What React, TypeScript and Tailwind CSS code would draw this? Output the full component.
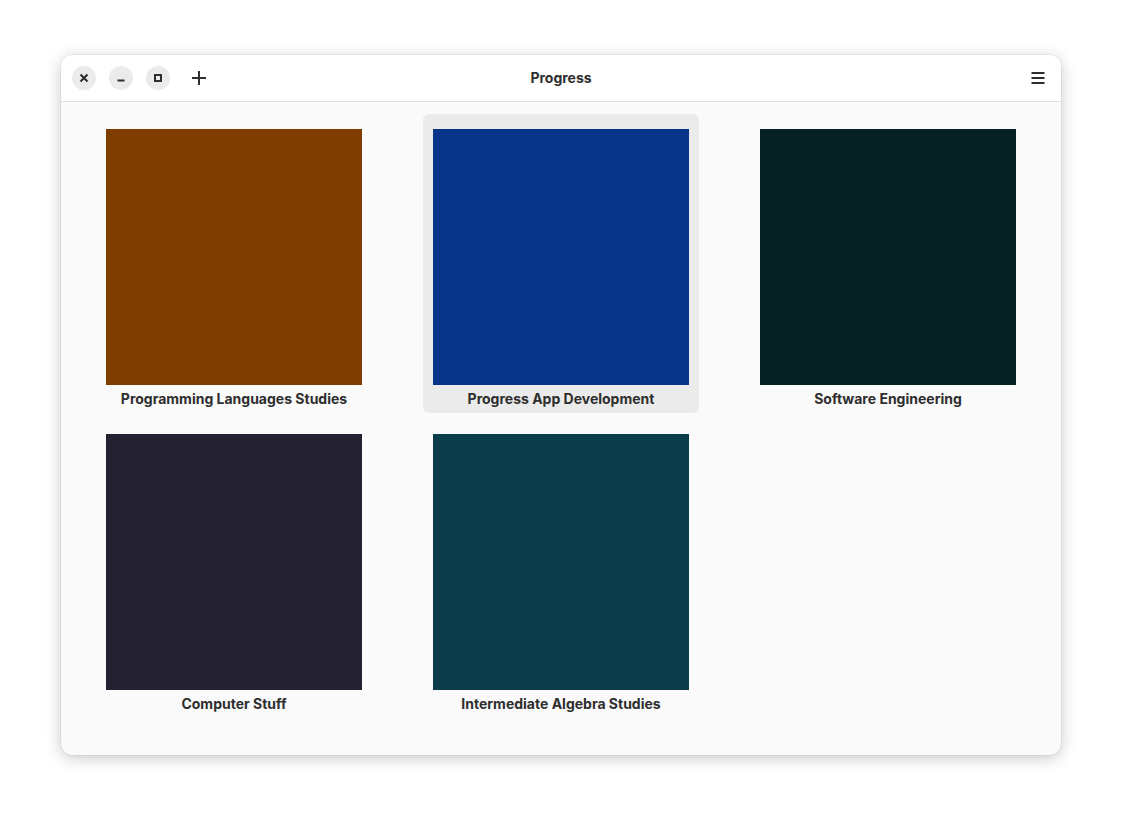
import React from "react";

const items = [
  { name: "Programming Languages Studies", color: "#7f3d00" },
  { name: "Progress App Development", color: "#08348a", selected: true },
  { name: "Software Engineering", color: "#051f22" },
  { name: "Computer Stuff", color: "#242131" },
  { name: "Intermediate Algebra Studies", color: "#0a3c4a" },
];

export default function App() {
  return (
    <div className="w-[1122px] h-[822px] bg-white flex items-start justify-center pt-[55px]" style={{ fontFamily: "Inter, 'Noto Sans', sans-serif" }}>
      <div className="w-[1000px] h-[700px] rounded-[12px] bg-[#fafafa] shadow-[0_3px_16px_rgba(0,0,0,0.22),0_0_0_1px_rgba(0,0,0,0.04)] overflow-hidden flex flex-col">
        <div className="h-[47px] bg-white border-b border-[#e0e0e0] flex items-center px-[11px] relative shrink-0">
          <div className="flex items-center gap-[13px]">
            <button className="w-[24px] h-[24px] rounded-full bg-[#ebebeb] flex items-center justify-center">
              <svg width="10" height="10" viewBox="0 0 10 10"><path d="M1.5 1.5L8.5 8.5M8.5 1.5L1.5 8.5" stroke="#2e2e2e" strokeWidth="2" /></svg>
            </button>
            <button className="w-[24px] h-[24px] rounded-full bg-[#ebebeb] flex items-center justify-center">
              <svg width="10" height="10" viewBox="0 0 10 10"><path d="M1.5 7.5H8.5" stroke="#2e2e2e" strokeWidth="2" /></svg>
            </button>
            <button className="w-[24px] h-[24px] rounded-full bg-[#ebebeb] flex items-center justify-center">
              <svg width="10" height="10" viewBox="0 0 10 10"><rect x="2" y="2" width="6" height="6" fill="none" stroke="#2e2e2e" strokeWidth="2" /></svg>
            </button>
            <button className="w-[32px] h-[24px] flex items-center justify-center">
              <svg width="16" height="16" viewBox="0 0 16 16"><path d="M8 1V15M1 8H15" stroke="#2e2e2e" strokeWidth="2" /></svg>
            </button>
          </div>
          <div className="absolute left-0 right-0 top-0 bottom-[2px] flex items-center justify-center pointer-events-none">
            <span className="text-[14px] font-bold text-[#2e2e2e]">Progress</span>
          </div>
          <button className="ml-auto w-[32px] h-[32px] flex items-center justify-center mr-[-4px]">
            <svg width="16" height="16" viewBox="0 0 16 16"><path d="M1.5 3H14.5M1.5 8H14.5M1.5 13H14.5" stroke="#2e2e2e" strokeWidth="2" /></svg>
          </button>
        </div>
        <div className="grid grid-cols-[276px_276px_276px] gap-x-[51px] gap-y-[6px] px-[35px] pt-[12px]">
          {items.map((it) => (
            <div key={it.name} className={`rounded-[6px] pt-[15px] px-[10px] flex flex-col items-center h-[299px] ${it.selected ? "bg-[#ebebeb]" : ""}`}>
              <div className="w-[256px] h-[256px] shrink-0" style={{ backgroundColor: it.color }} />
              <div className="h-[26px] flex items-center text-[14px] font-bold text-[#2e2e2e]">{it.name}</div>
            </div>
          ))}
        </div>
      </div>
    </div>
  );
}
